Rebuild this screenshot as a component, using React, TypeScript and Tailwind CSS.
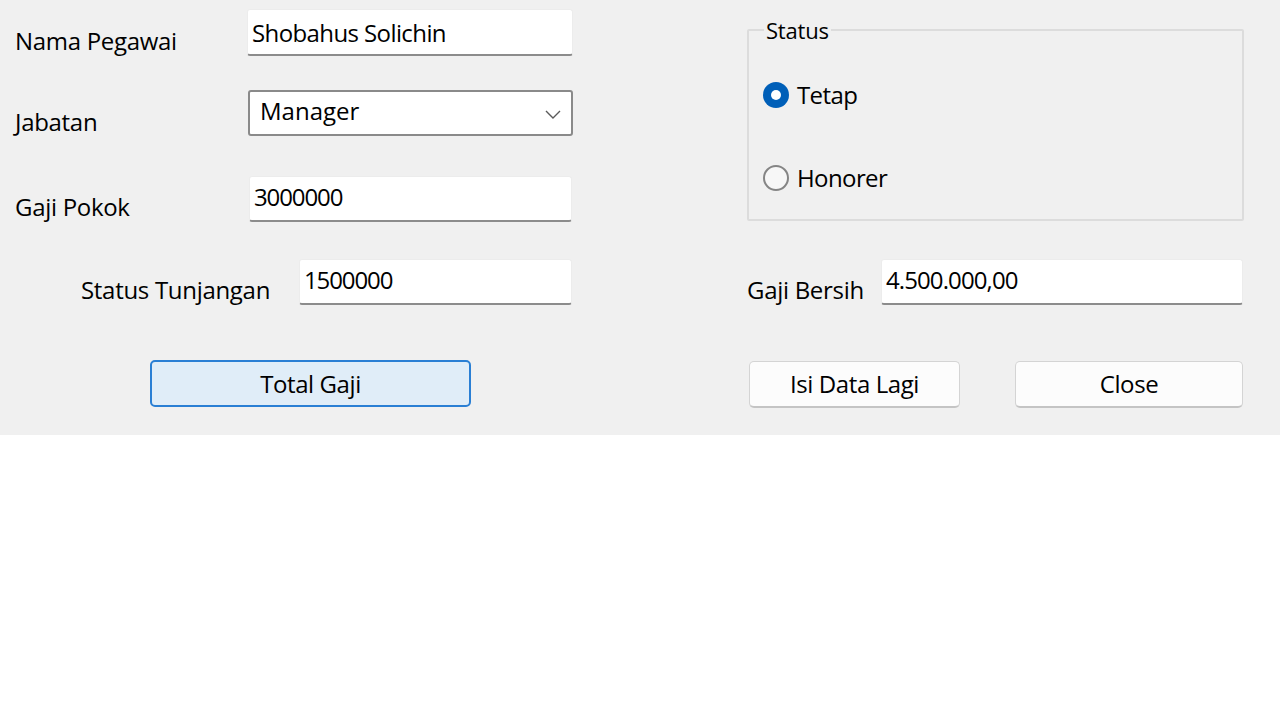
const font = { fontFamily: '"Open Sans", "Noto Sans", sans-serif' }

const TextBox = ({ value, className }: { value: string; className: string }) => (
    <div
        className={`flex items-start rounded-[3px] border border-[#ececec] border-b-2 border-b-[#8c8c8c] bg-white pl-[4px] text-[24px] leading-[32px] text-black ${className}`}
    >
        {value}
    </div>
)

const Button = ({ label, primary, className }: { label: string; primary?: boolean; className: string }) => (
    <button
        type="button"
        className={`flex h-[47px] items-center justify-center rounded-[5px] text-[24px] leading-[32px] tracking-[-0.4px] text-black ${
            primary
                ? 'border-2 border-[#2a7fd4] bg-[#e0edf8]'
                : 'border border-[#d4d4d4] border-b-2 border-b-[#c4c4c4] bg-[#fcfcfc]'
        } ${className}`}
    >
        {label}
    </button>
)

const Radio = ({ label, checked }: { label: string; checked?: boolean }) => (
    <div className="flex items-center">
        {checked ? (
            <span className="flex h-[26px] w-[26px] items-center justify-center rounded-full bg-[#005fb8]">
                <span className="h-[10px] w-[10px] rounded-full bg-white" />
            </span>
        ) : (
            <span className="h-[26px] w-[26px] rounded-full border-2 border-[#858585] bg-[#f7f7f7]" />
        )}
        <span className="ml-[8px] text-[24px] leading-[32px] tracking-[-0.6px] text-black">{label}</span>
    </div>
)

const Label = ({ text, className }: { text: string; className: string }) => (
    <span className={`text-[24px] leading-[32px] tracking-[-0.3px] text-black ${className}`}>{text}</span>
)

export default function App() {
    return (
        <div style={font} className="min-h-[720px] w-[1280px] bg-white">
            <div className="flex h-[435px] w-full bg-[#f0f0f0]">
                {/* left column */}
                <div className="flex w-[600px] flex-col">
                    <div className="mt-[9px] flex h-[47px] items-start">
                        <Label text="Nama Pegawai" className="ml-[15px] mt-[16px] w-[232px]" />
                        <TextBox value="Shobahus Solichin" className="h-[47px] w-[326px] pt-[7px] tracking-[-0.6px]" />
                    </div>
                    <div className="mt-[34px] flex h-[46px] items-start">
                        <Label text="Jabatan" className="ml-[15px] mt-[16px] w-[233px]" />
                        <div className="flex h-[46px] w-[325px] items-center justify-between rounded-[3px] border-2 border-[#8a8a8a] bg-white pl-[10px] pr-[8px]">
                            <span className="-mt-[4px] text-[24px] leading-[32px] text-black">Manager</span>
                            <svg width="20" height="20" viewBox="0 0 20 20" className="mt-[2px]">
                                <path d="M3 7l7 7 7-7" fill="none" stroke="#5a5a5a" strokeWidth="1.4" />
                            </svg>
                        </div>
                    </div>
                    <div className="mt-[40px] flex h-[46px] items-start">
                        <Label text="Gaji Pokok" className="ml-[15px] mt-[15px] w-[234px]" />
                        <TextBox value="3000000" className="h-[46px] w-[323px] pt-[4px] tracking-[-1.1px]" />
                    </div>
                    <div className="mt-[37px] flex h-[46px] items-start">
                        <Label text="Status Tunjangan" className="ml-[81px] mt-[15px] w-[218px]" />
                        <TextBox value="1500000" className="h-[46px] w-[273px] pt-[4px] tracking-[-1.1px]" />
                    </div>
                    <div className="mt-[55px] flex">
                        <Button label="Total Gaji" primary className="ml-[150px] w-[321px]" />
                    </div>
                </div>

                {/* right column */}
                <div className="ml-[147px] flex w-[497px] flex-col">
                    <fieldset className="mt-[14px] h-[207px] w-[497px] rounded-[2px] border-2 border-[#dcdcdc] px-[14px]">
                        <legend className="ml-[1px] px-[2px] text-[22px] leading-[32px] tracking-[-0.2px] text-black">Status</legend>
                        <div className="mt-[33px]">
                            <Radio label="Tetap" checked />
                        </div>
                        <div className="mt-[51px]">
                            <Radio label="Honorer" />
                        </div>
                    </fieldset>
                    <div className="mt-[38px] flex h-[46px] items-start">
                        <Label text="Gaji Bersih" className="mt-[15px] w-[134px]" />
                        <TextBox value="4.500.000,00" className="h-[46px] w-[362px] pt-[4px] tracking-[-0.9px]" />
                    </div>
                    <div className="mt-[56px] flex">
                        <Button label="Isi Data Lagi" className="ml-[2px] w-[211px]" />
                        <Button label="Close" className="ml-[55px] w-[228px]" />
                    </div>
                </div>
            </div>
        </div>
    )
}
